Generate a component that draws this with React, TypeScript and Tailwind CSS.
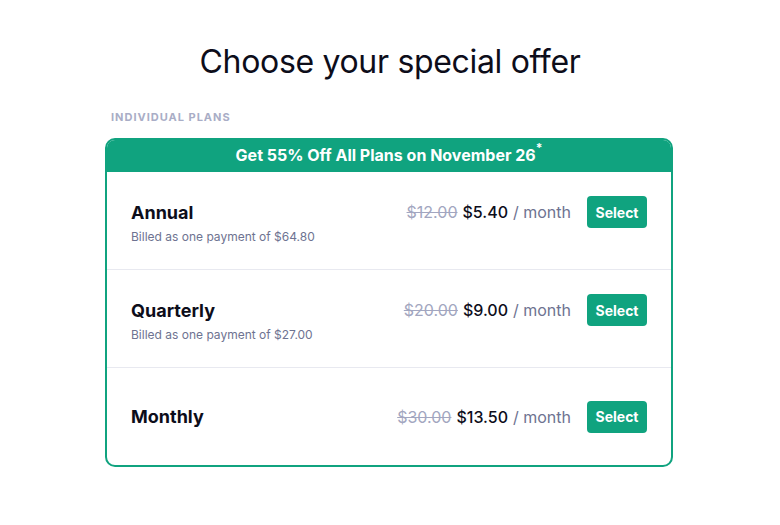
// Special offer picker: three billing plans under a promo banner.
const PLANS = [
  { name: "Annual", note: "Billed as one payment of $64.80", was: "$12.00", now: "$5.40" },
  { name: "Quarterly", note: "Billed as one payment of $27.00", was: "$20.00", now: "$9.00" },
  { name: "Monthly", note: "", was: "$30.00", now: "$13.50" },
];

export default function App() {
  return (
    <div
      className="min-h-screen bg-white flex flex-col items-center pt-[42px] text-[#111827]"
      style={{ fontFamily: "Inter, 'Noto Sans', sans-serif" }}
    >
      <h1 className="text-[32px] leading-[40px] font-normal tracking-[-0.01em] text-[#0d0d1a]">
        Choose your special offer
      </h1>

      <div className="w-[568px] mt-[27px] mr-[2px]">
        <div className="pl-[6px] text-[11px] leading-4 font-bold tracking-[0.09em] text-[#a9adc6]">
          INDIVIDUAL PLANS
        </div>

        <div className="mt-[13px] rounded-[10px] border-2 border-[#10a37f] overflow-hidden">
          <div className="bg-[#10a37f] h-[32px] pb-[3px] flex items-center justify-center text-white text-[16px] font-bold">
            Get 55% Off All Plans on November 26
            <span className="self-start mt-[2px] text-[12px] leading-3">*</span>
          </div>

          {PLANS.map((p, i) => (
            <div
              key={p.name}
              className={`px-6 flex flex-col justify-center ${
                i > 0 ? "min-h-[98px] border-t border-[#e8e9f0]" : "min-h-[97px]"
              }`}
            >
              <div className="h-8 flex items-center justify-between">
                <div className="text-[18px] font-bold text-[#0d0d1a]">{p.name}</div>
                <div className="flex items-center">
                  <span className="text-[16px] text-[#a2a6c0] line-through">{p.was}</span>
                  <span className="ml-[5px] text-[16px] font-medium text-[#0d0d1a]">{p.now}</span>
                  <span className="ml-[5px] text-[16px] text-[#6e7391]">/ month</span>
                  <button className="ml-4 h-8 w-[60px] rounded bg-[#10a37f] text-white text-[14px] font-bold">
                    Select
                  </button>
                </div>
              </div>
              {p.note && (
                <div className="mt-px text-[12px] leading-4 text-[#6e7391]">{p.note}</div>
              )}
            </div>
          ))}
        </div>
      </div>
    </div>
  );
}
